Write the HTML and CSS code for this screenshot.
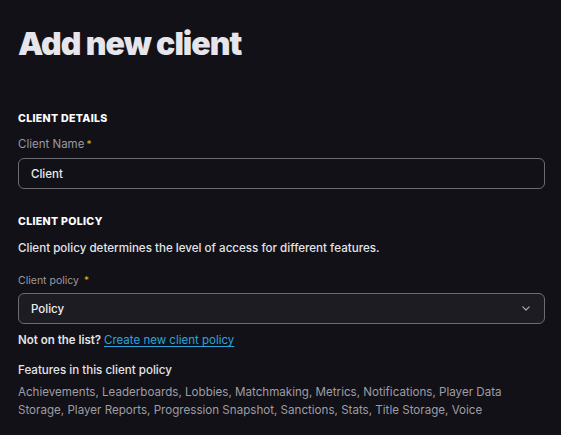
FILE: index.html
```html
<!DOCTYPE html>
<html lang="en">
<head>
<meta charset="utf-8">
<link rel="stylesheet" href="styles.css">
</head>
<body>
<main class="page">
  <h1 class="title">Add new client</h1>

  <section class="section section-details">
    <h2 class="section-title">Client Details</h2>
    <label class="field-label">Client Name<span class="req">*</span></label>
    <div class="input">Client</div>
  </section>

  <section class="section section-policy">
    <h2 class="section-title">Client Policy</h2>
    <p class="desc">Client policy determines the level of access for different features.</p>
    <label class="field-label small">Client policy <span class="req">*</span></label>
    <div class="input select">
      <span>Policy</span>
      <svg class="chev" width="8" height="5" viewBox="0 0 8 5"><path d="M0.8 0.8l3.2 3.2 3.2-3.2" fill="none" stroke="#a9a8ae" stroke-width="1.2" stroke-linecap="round" stroke-linejoin="round"/></svg>
    </div>
    <p class="notlist">Not on the list? <a class="link" href="#">Create new client policy</a></p>
    <h3 class="features-title">Features in this client policy</h3>
    <p class="features">Achievements, Leaderboards, Lobbies, Matchmaking, Metrics, Notifications, Player Data Storage, Player Reports, Progression Snapshot, Sanctions, Stats, Title Storage, Voice</p>
  </section>
</main>
</body>
</html>
```

FILE: styles.css
```css
* { box-sizing: border-box; }
html, body {
  margin: 0;
  background: #121117;
  color: #e6e6ea;
  font-family: Inter, "Noto Sans", sans-serif;
}
.page {
  padding: 24px 16px 0 18px;
}
.title {
  margin: 0;
  font-size: 32px;
  font-weight: 900;
  letter-spacing: -1px;
  line-height: 40px;
  color: #e6e5eb;
}
.section-details { margin-top: 48px; }
.section-title {
  margin: 0;
  font-size: 10.6px;
  font-weight: 800;
  text-transform: uppercase;
  letter-spacing: 0.3px;
  line-height: 14px;
  color: #ffffff;
}
.field-label {
  display: block;
  margin-top: 11px;
  font-size: 11.5px;
  line-height: 14px;
  color: #9a99a0;
}
.field-label.small { font-size: 10.5px; margin-top: 18px; }
.req { color: #e0b21a; margin-left: 2px; font-size: 10px; }
.input {
  margin-top: 7px;
  height: 31px;
  border: 1px solid #6c6b71;
  border-radius: 6px;
  padding: 0 12px;
  display: flex;
  align-items: center;
  font-size: 11.5px;
  font-weight: 500;
  color: #ededf0;
}
.select {
  margin-top: 5px;
  background: #1d1c22;
  justify-content: space-between;
  padding-right: 14px;
}
.chev { display: block; }
.section-policy { margin-top: 26px; }
.desc {
  margin: 12px 0 0;
  font-size: 11.6px;
  font-weight: 500;
  line-height: 14px;
  color: #e4e4e8;
}
.notlist {
  margin: 9px 0 0;
  font-size: 11.5px;
  font-weight: 600;
  line-height: 14px;
  color: #e4e4e8;
}
.link {
  color: #2aa3dc;
  font-weight: 400;
  text-decoration: underline;
  text-underline-offset: 2px;
}
.features-title {
  margin: 16px 0 0;
  font-size: 11.6px;
  font-weight: 500;
  line-height: 14px;
  color: #e4e4e8;
}
.features {
  margin: 6px 0 0;
  font-size: 11.6px;
  line-height: 18px;
  color: #9e9da4;
  max-width: 520px;
}
```
